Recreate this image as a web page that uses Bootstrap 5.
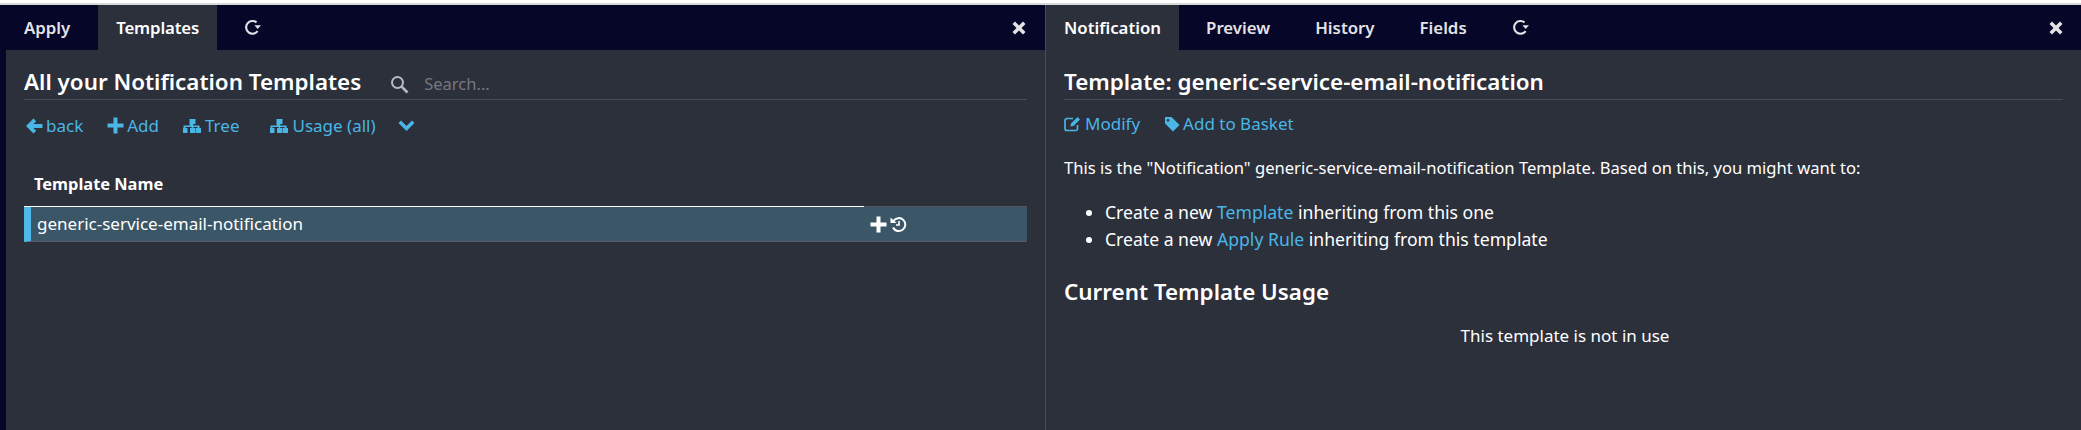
<!DOCTYPE html>
<html lang="en">
<head>
<meta charset="utf-8">
<title>Notification Templates</title>
<link href="https://cdn.jsdelivr.net/npm/bootstrap@5.3.0/dist/css/bootstrap.min.css" rel="stylesheet">
<style>
html,body{height:430px;overflow:hidden;background:#fff}
body{font-family:"Noto Sans","Open Sans",sans-serif;font-size:17px;color:#fff}
.topline{height:5px;background:#fff;border-bottom:2px solid #d8d8d8}
.shell{height:425px;background:#050628;padding-left:6px}
.pane{background:#2c303b;min-width:0}
.pane-left{width:1039px}
.pane-right{flex:1;border-left:1px solid #4a4d55}
.tabbar{height:45px;background:#050628;align-items:stretch}
.tabbar .nav-link{color:#e3e3e6;font-weight:600;font-size:16.8px;padding:0 18px;margin-right:9px;display:flex;align-items:center;height:45px;border-radius:0}
.tabbar .nav-link.active{background:#2c303b;color:#fff}
.pane-left .tabbar .nav-link:first-child{margin-right:10px}
.pane-left .tabbar .nav-link.active{letter-spacing:-.15px}
.closex{margin-left:auto;display:flex;align-items:center;color:#e3e3e6}
.pane-left .closex{padding-right:18px}
.pane-right .closex{padding-right:17px}
.content{padding:0 18px}
.page-title{display:flex;align-items:flex-end;border-bottom:1px solid #4a4d55;height:50px;padding-bottom:1px}
.page-title h1{font-size:22.4px;font-weight:600;margin:0;line-height:33px;color:#fff;white-space:nowrap}
.searchbox{display:flex;align-items:center;margin-left:29px;color:#75777f;font-size:16.5px;line-height:28px}
.searchbox svg{margin-right:15px}
.actions{height:52px;align-items:center;font-size:17px;padding-bottom:1px}
.actions-right{height:48px}
.actions a,.lk{color:#49b6e6;text-decoration:none;display:inline-flex;align-items:center;white-space:nowrap}
.lk{display:inline}
.actions svg{margin-right:3px;flex:none}
.thead-cell{font-weight:700;font-size:16.4px;padding:20px 0 0 10px;height:54px;line-height:24px;color:#fff}
.tpl-row{height:36px;width:1003px;background:#3a5667;border-left:7px solid #4eb9e9;border-top:1px solid #55585f;border-bottom:1px solid #555c65;position:relative;display:flex;align-items:center;padding-left:6px}
.tpl-row::before{content:"";position:absolute;left:-7px;top:-1px;width:840px;height:1px;background:#fff}
.tpl-row .name{width:833px;font-size:17px;color:#fff}
.tpl-row .ops{display:flex;align-items:center;gap:3px}
.intro{font-size:16.6px;margin:8px 0 19px;line-height:24px;color:#fff;white-space:nowrap}
.list-usage{margin:0 0 22px;padding-left:41px;line-height:27px;color:#fff;font-size:17.6px}
h2.usage{font-size:22.4px;font-weight:600;margin:0;line-height:33px;color:#fff}
.notuse{text-align:center;margin-top:16px;padding-left:3px;line-height:24px;color:#fff;font-size:17px}
</style>
</head>
<body>
<div class="topline"></div>
<div class="shell d-flex">
  <section class="pane pane-left">
    <nav class="nav tabbar d-flex">
      <a class="nav-link" href="#">Apply</a>
      <a class="nav-link active" href="#">Templates</a>
      <a class="nav-link" href="#" aria-label="Refresh">
        <svg width="17" height="17" viewBox="0 0 16 16" fill="none" stroke="currentColor" stroke-width="2"><path d="M12.800 11.500A6 6 0 1 1 11.800 3.200"/><path d="M9.800 5.800 H16 L12.900 9.500Z" fill="currentColor" stroke="none"/></svg>
      </a>
      <span class="closex"><svg width="16" height="16" viewBox="0 0 16 16"><path d="M1.500 4 L4 1.500 L8 5.500 L12 1.500 L14.500 4 L10.500 8 L14.500 12 L12 14.500 L8 10.500 L4 14.500 L1.500 12 L5.500 8Z" fill="currentColor"/></svg></span>
    </nav>
    <div class="content">
      <div class="page-title">
        <h1>All your Notification Templates</h1>
        <div class="searchbox">
          <svg width="19" height="19" viewBox="0 0 19 19" fill="none" stroke="#b9bbc0" stroke-width="2"><circle cx="7.500" cy="7.500" r="5.500"/><path d="M11.600 11.600 L17.500 17.500" stroke-width="2.600"/></svg>
          <span>Search...</span>
        </div>
      </div>
      <div class="actions d-flex">
        <a href="#" style="margin-left:2px"><svg width="17" height="16" viewBox="0 0 17 16"><path d="M7.500 0.500 L10.200 3.200 L7.400 6 H16.500 V10 H7.400 L10.200 12.800 L7.500 15.500 L0 8Z" fill="#49b6e6"/></svg>back</a>
        <a href="#" style="margin-left:24px"><svg width="17" height="17" viewBox="0 0 17 17"><path d="M6.500 0.500 H10.500 V6.500 H16.500 V10.500 H10.500 V16.500 H6.500 V10.500 H0.500 V6.500 H6.500Z" fill="#49b6e6"/></svg>Add</a>
        <a href="#" style="margin-left:24px"><svg width="19" height="16" viewBox="0 0 19 16" fill="#49b6e6"><path d="M6.500 1h6v5h-2.200v1.500h6.200V10h1.500v5h-5.500v-5h2V9H10.300v1h1.700v5H7v-5h1.700V9H2.500v1h2v5H-1v-5h1.500V7.500h6.200V6H6.500z"/></svg>Tree</a>
        <a href="#" style="margin-left:31px"><svg width="19" height="16" viewBox="0 0 19 16" fill="#49b6e6"><path d="M6.500 1h6v5h-2.200v1.500h6.200V10h1.500v5h-5.500v-5h2V9H10.300v1h1.700v5H7v-5h1.700V9H2.500v1h2v5H-1v-5h1.500V7.500h6.200V6H6.500z"/></svg>Usage (all)</a>
        <a href="#" style="margin-left:22px" aria-label="More"><svg width="17" height="12" viewBox="0 0 17 12"><path d="M0.500 3 L3 0.500 L8.500 6 L14 0.500 L16.500 3 L8.500 11Z" fill="#49b6e6"/></svg></a>
      </div>
      <div class="thead-cell">Template Name</div>
      <div class="tpl-row">
        <span class="name">generic-service-email-notification</span>
        <span class="ops">
          <svg width="17" height="17" viewBox="0 0 17 17"><path d="M6.500 0.500 H10.500 V6.500 H16.500 V10.500 H10.500 V16.500 H6.500 V10.500 H0.500 V6.500 H6.500Z" fill="#fff"/></svg>
          <svg width="17" height="17" viewBox="0 0 17 17" fill="none" stroke="#fff" stroke-width="2"><path d="M3.400 5 A6.500 6.500 0 1 1 3 11.500"/><path d="M0.500 1.500 V7 H6.500Z" fill="#fff" stroke="none"/><path d="M9 5 V9 H6" stroke-width="1.600"/></svg>
        </span>
      </div>
    </div>
  </section>
  <section class="pane pane-right">
    <nav class="nav tabbar d-flex">
      <a class="nav-link active" href="#">Notification</a>
      <a class="nav-link" href="#">Preview</a>
      <a class="nav-link" href="#">History</a>
      <a class="nav-link" href="#">Fields</a>
      <a class="nav-link" href="#" aria-label="Refresh">
        <svg width="17" height="17" viewBox="0 0 16 16" fill="none" stroke="currentColor" stroke-width="2"><path d="M12.800 11.500A6 6 0 1 1 11.800 3.200"/><path d="M9.800 5.800 H16 L12.900 9.500Z" fill="currentColor" stroke="none"/></svg>
      </a>
      <span class="closex"><svg width="16" height="16" viewBox="0 0 16 16"><path d="M1.500 4 L4 1.500 L8 5.500 L12 1.500 L14.500 4 L10.500 8 L14.500 12 L12 14.500 L8 10.500 L4 14.500 L1.500 12 L5.500 8Z" fill="currentColor"/></svg></span>
    </nav>
    <div class="content">
      <div class="page-title"><h1>Template: generic-service-email-notification</h1></div>
      <div class="actions actions-right d-flex">
        <a href="#"><svg width="18" height="17" viewBox="0 0 18 17" fill="none" stroke="#49b6e6" stroke-width="1.700"><path d="M13.500 10 V14 A2 2 0 0 1 11.500 15.500 H3 A2 2 0 0 1 1 13.500 V5.500 A2 2 0 0 1 3 3.500 H9"/><path d="M7 8.500 L13.500 2 L16 4.500 L9.500 11 L6.500 11.500Z" fill="#49b6e6" stroke="none"/></svg>Modify</a>
        <a href="#" style="margin-left:24px"><svg width="16" height="16" viewBox="0 0 16 16"><path d="M1 1 H7.500 L15.500 9 L9 15.500 L1 7.500Z M4 3 A1.300 1.300 0 1 0 4 5.600 A1.300 1.300 0 1 0 4 3Z" fill="#49b6e6" fill-rule="evenodd"/></svg>Add to Basket</a>
      </div>
      <p class="intro">This is the "Notification" generic-service-email-notification Template. Based on this, you might want to:</p>
      <ul class="list-usage">
        <li>Create a new <a class="lk" href="#">Template</a> inheriting from this one</li>
        <li>Create a new <a class="lk" href="#">Apply Rule</a> inheriting from this template</li>
      </ul>
      <h2 class="usage">Current Template Usage</h2>
      <div class="notuse">This template is not in use</div>
    </div>
  </section>
</div>
</body>
</html>
